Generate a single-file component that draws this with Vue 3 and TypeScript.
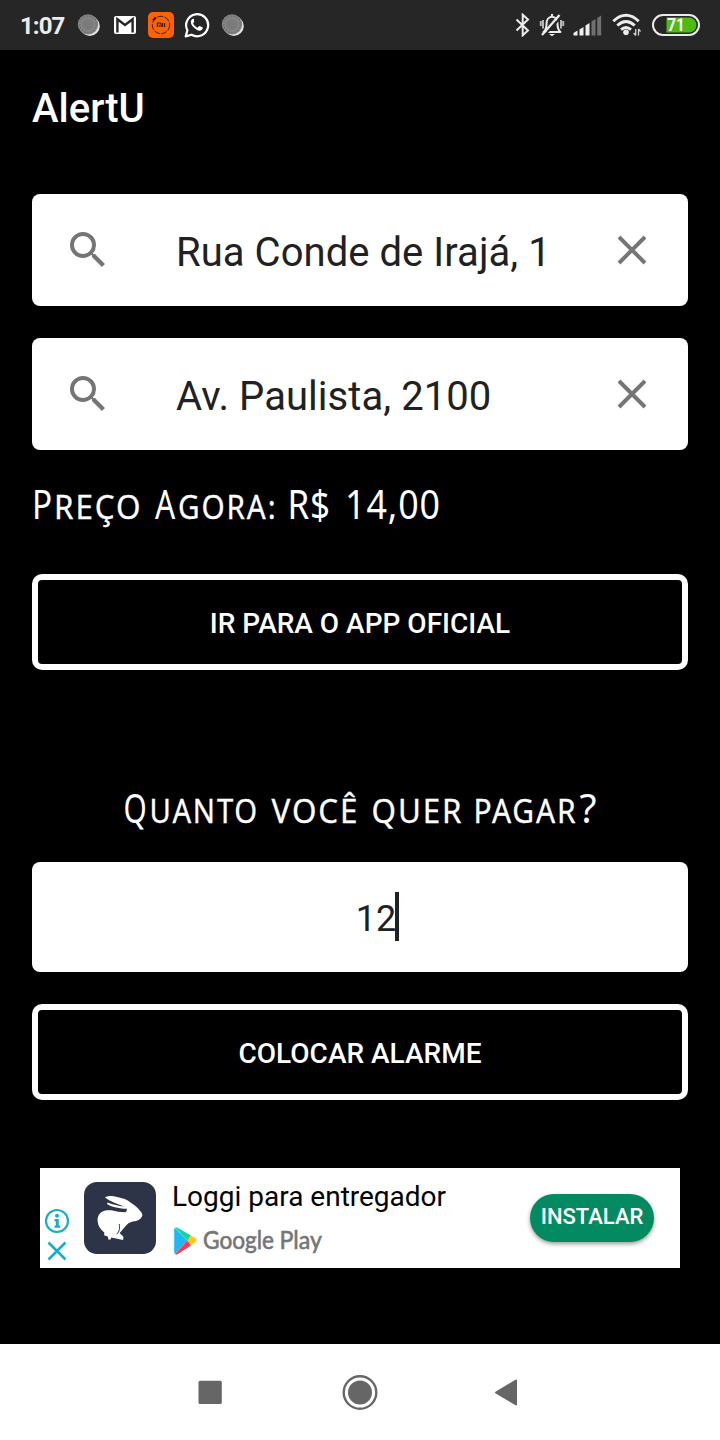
<script setup lang="ts">
import { ref } from 'vue'

interface Run {
  text: string
  x: number
  width: number
  small?: boolean
}

const addresses = ref<string[]>(['Rua Conde de Irajá, 1', 'Av. Paulista, 2100'])
const amount = ref('12')

const priceRuns: Run[] = [
  { text: 'P', x: 0, width: 21 },
  { text: 'reço', x: 22, width: 88.5, small: true },
  { text: 'A', x: 123, width: 21 },
  { text: 'gora:', x: 146, width: 99.5, small: true },
  { text: 'R$', x: 255.5, width: 43.5 },
  { text: '14,00', x: 313, width: 96 },
]

const questionRuns: Run[] = [
  { text: 'Q', x: 91.5, width: 24 },
  { text: 'uanto', x: 117.5, width: 109.5, small: true },
  { text: 'você', x: 239.5, width: 88, small: true },
  { text: 'quer', x: 339.5, width: 92, small: true },
  { text: 'pagar', x: 441.5, width: 104, small: true },
  { text: '?', x: 547.5, width: 18 },
]

const signalBars = [
  { x: 0.5, h: 5, on: true },
  { x: 6.5, h: 8.5, on: true },
  { x: 12.5, h: 12.5, on: true },
  { x: 18.5, h: 16.5, on: false },
  { x: 24.2, h: 20, on: false },
]
</script>

<template>
  <div class="screen">
    <header class="status">
      <span class="clock">1:07</span>
      <svg class="moon" width="24" height="24" viewBox="0 0 24 24">
        <circle cx="12.8" cy="13" r="10" fill="#e4e4e4" />
        <circle cx="11" cy="11.4" r="10.2" fill="#858585" />
        <circle cx="11" cy="11.4" r="8.3" fill="none" stroke="#686868" stroke-width="1.4" stroke-dasharray="1.3 1.8" />
        <circle cx="11" cy="11.4" r="5.5" fill="#7b7b7b" />
      </svg>
      <svg class="mail" width="22" height="18" viewBox="0 0 22 18">
        <rect width="22" height="18" rx="2" fill="#fff" />
        <path d="M3.4 16.5V3.2L11 9l7.6-5.8v13.3" fill="none" stroke="#262626" stroke-width="2.4" />
      </svg>
      <svg class="mi" width="26" height="26" viewBox="0 0 26 26">
        <rect width="26" height="26" rx="5" fill="#ff6200" />
        <circle cx="13" cy="13" r="8.7" fill="none" stroke="#3c2014" stroke-width="1" stroke-dasharray="6 1.4" />
        <path d="M5 8.5l2.8-3" stroke="#2b1b15" stroke-width="2" />
        <path d="M9.4 15v-4h2.7q1 0 1 1v3m-1.9-2.2V15M14.6 11v4m2-4v4" fill="none" stroke="#2b1b15" stroke-width="1.1" />
      </svg>
      <svg class="whats" width="26" height="26" viewBox="0 0 26 26">
        <path d="M1.7 24.4l1.7-6.1A11 11 0 1 1 7.6 22.7z" fill="none" stroke="#fff" stroke-width="2.2" stroke-linejoin="round" />
        <path d="M9.3 6.7c-.5 0-1 .2-1.5.8-2.2 2.5-.2 5.9 2.1 8.1 2.5 2.4 5.6 4.1 7.7 2.5 1.1-.8 1.3-2 1.1-2.5l-3-1.5c-.4-.2-.7 0-1 .4l-1 1.2c-2.1-.8-3.7-2.3-4.7-4.2l1-1.3c.2-.3.2-.6.1-.9L9.9 7c-.2-.3-.4-.3-.6-.3z" fill="#fff" />
      </svg>
      <svg class="moon last" width="24" height="24" viewBox="0 0 24 24">
        <circle cx="12.8" cy="13" r="10" fill="#e4e4e4" />
        <circle cx="11" cy="11.4" r="10.2" fill="#858585" />
        <circle cx="11" cy="11.4" r="8.3" fill="none" stroke="#686868" stroke-width="1.4" stroke-dasharray="1.3 1.8" />
        <circle cx="11" cy="11.4" r="5.5" fill="#7b7b7b" />
      </svg>
      <span class="grow"></span>
      <svg class="bt" width="16" height="24" viewBox="0 0 16 24">
        <path d="M1.5 6.5L13 17.5 7.7 22.3V1.7L13 6.5 1.5 17.5" fill="none" stroke="#ececec" stroke-width="2" />
      </svg>
      <svg class="bell" width="26" height="24" viewBox="0 0 26 24">
        <path d="M4.500 19c2.600-2 3-4 3-8 0-4 2-7.300 5.500-7.300s5.500 3.300 5.500 7.300c0 4 .4 6 3 8z" fill="none" stroke="#ececec" stroke-width="2" stroke-linejoin="round" />
        <path d="M10 21h6l-3 2.300zM12 1h2v3h-2z" fill="#ececec" />
        <path d="M1.800 8v5M4 7v8.500M24.200 8v5M22 7v8.500" stroke="#b5b5b5" stroke-width="2" />
        <path d="M4.500 23.500L22 4" stroke="#262626" stroke-width="2" />
        <path d="M3 22L20.500 2" stroke="#ececec" stroke-width="2.200" />
      </svg>
      <svg class="signal" width="29" height="21" viewBox="0 0 29 21">
        <path
          v-for="bar in signalBars"
          :key="bar.x"
          :d="`M${bar.x} 20.500v${2.500 - bar.h}l4-2.500v${bar.h}z`"
          :fill="bar.on ? '#efefef' : '#707070'"
        />
      </svg>
      <svg class="wifi" width="30" height="24" viewBox="0 0 30 24">
        <g fill="none" stroke="#ececec" stroke-width="2.900">
          <path d="M1.300 8.200Q14 -3.700 26.700 8.200" />
          <path d="M5.300 12.500Q14 4.500 22.700 12.500" />
          <path d="M9 16.600Q14 12.300 19 16.600" />
        </g>
        <circle cx="14" cy="19.300" r="2.800" fill="#ececec" />
        <path d="M23.700 16v6.500M26.500 16v6.500M21.700 20l2 2.500M28.500 18.500l-2-2.500" fill="none" stroke="#cfcfcf" stroke-width="1.300" />
      </svg>
      <svg class="battery" width="48" height="22" viewBox="0 0 48 22">
        <rect x="1" y="1" width="46" height="20" rx="10" fill="none" stroke="#ececec" stroke-width="2" />
        <path d="M14.500 3.500H37a7.500 7.500 0 0 1 0 15H14.500z" fill="#4dbb12" />
        <text class="level" x="24" y="17.200" text-anchor="middle" textLength="17.500" lengthAdjust="spacingAndGlyphs">71</text>
      </svg>
    </header>

    <main class="content">
      <h1 class="title">AlertU</h1>

      <div v-for="(address, i) in addresses" :key="i" class="field">
        <svg width="48" height="48" viewBox="0 0 24 24">
          <path fill="#757575" d="M15.500 14h-.79l-.28-.27A6.471 6.471 0 0 0 16 9.500 6.500 6.500 0 1 0 9.500 16c1.610 0 3.090-.59 4.230-1.570l.27.28v.79l5 4.990L20.490 19l-4.990-5zm-6 0C7.010 14 5 11.990 5 9.500S7.010 5 9.500 5 14 7.010 14 9.500 11.990 14 9.500 14z" />
        </svg>
        <span class="address">{{ address }}</span>
        <svg width="48" height="48" viewBox="0 0 48 48">
          <path d="M11 11l26 26M37 11L11 37" stroke="#757575" stroke-width="3.900" />
        </svg>
      </div>

      <svg class="caps price" width="656" height="68">
        <text
          v-for="run in priceRuns"
          :key="run.text"
          :class="{ small: run.small }"
          :x="run.x"
          y="45.200"
          :textLength="run.width"
          lengthAdjust="spacingAndGlyphs"
        >{{ run.text }}</text>
      </svg>

      <button class="outline">IR PARA O APP OFICIAL</button>

      <svg class="caps question" width="656" height="68">
        <text
          v-for="run in questionRuns"
          :key="run.text"
          :class="{ small: run.small }"
          :x="run.x"
          y="48.700"
          :textLength="run.width"
          lengthAdjust="spacingAndGlyphs"
        >{{ run.text }}</text>
      </svg>

      <div class="amount"><span>{{ amount }}</span><i class="caret"></i></div>

      <button class="outline">COLOCAR ALARME</button>

      <section class="ad">
        <div class="choices">
          <svg width="26" height="26" viewBox="0 0 26 26">
            <circle cx="13" cy="13" r="11" fill="none" stroke="#18aec9" stroke-width="2.200" />
            <circle cx="13" cy="7.700" r="2" fill="#18aec9" />
            <path d="M10.500 11h4.300v6.500h1.500v2.200h-5.800v-2.200h1.300v-4.300h-1.300z" fill="#18aec9" />
          </svg>
          <svg width="26" height="26" viewBox="0 0 26 26">
            <path d="M4.500 4.500l17 17M21.500 4.500l-17 17" stroke="#18aec9" stroke-width="2.600" />
          </svg>
        </div>
        <svg class="logo" width="72" height="72" viewBox="0 0 72 72">
          <rect width="72" height="72" rx="13" fill="#2e3447" />
          <path d="M21 15.500c2-2 8-2 12-.5 6 1.300 10 2.300 13.500 5.500 4 2.300 7.500 5.500 9.700 8.500 1.700 1.800 2.300 3.200 2.100 4.500-.6 3-4 5-7.500 5.800-3 .4-5.500 1-7.500 3-3 3.300-5 6-7.700 8.700l3.800 3.700-.3 3.300-11.800-2.500-1 2.300-2.200-.5v-2.500l-4-1.500.2-2.800c-4-3-6.500-7-6.700-11.500-.3-5 2-9 7.500-10.500 4-.8 9-.2 13 1.300l7.300.5c1.300-.8 1.500-2 1.500-3.500-7-.3-14.500-1.300-19.900-4.800l.7-1.600c5 2 11 3.500 16.500 4.200C33 21.500 26 19.500 21 15.500z" fill="#fff" />
          <path d="M35.200 42c.8 4 .5 7.500-2.700 10.300" fill="none" stroke="#2e3447" stroke-width="1" />
        </svg>
        <div class="copy">
          <span class="app">Loggi para entregador</span>
          <svg width="152" height="34" viewBox="0 0 152 34">
            <path d="M3 4L15.500 16.500 3 30q-.8-.5-.8-2V5.500q0-1 .8-1.500z" fill="#20b8f3" />
            <path d="M3 3.500q1-.7 2.500.2L19 11.500l-3.500 5z" fill="#18d49b" />
            <path d="M3 30.200q1 .8 2.500 0L19 21.500l-3.500-5z" fill="#f43b55" />
            <path d="M19 11.500l5 3.300q1.500 1.200 0 2.700l-5 4-3.500-5z" fill="#ffc718" />
            <text class="play" x="31" y="25" textLength="71" lengthAdjust="spacingAndGlyphs">Google</text>
            <text class="play" x="107.500" y="25" textLength="42.500" lengthAdjust="spacingAndGlyphs">Play</text>
          </svg>
        </div>
        <button class="install">INSTALAR</button>
      </section>
    </main>

    <nav class="nav">
      <svg width="24" height="24"><rect x=".5" y=".7" width="23.300" height="23.300" rx="1.500" fill="#666" /></svg>
      <svg class="home" width="36" height="37">
        <circle cx="18" cy="18.500" r="16.300" fill="none" stroke="#666" stroke-width="2.400" />
        <circle cx="18" cy="18.500" r="12" fill="#666" />
      </svg>
      <svg width="24" height="28"><path d="M22 2.500v24L2 14.500z" fill="#666" stroke="#666" stroke-width="2" stroke-linejoin="round" /></svg>
    </nav>
  </div>
</template>

<style>
body {
  margin: 0;
  background: #000;
}
</style>

<style scoped>
.screen {
  display: flex;
  flex-direction: column;
  width: 720px;
  height: 1440px;
  background: #000;
  font-family: Roboto, "Noto Sans", sans-serif;
  overflow: hidden;
}
svg {
  display: block;
  flex: none;
}
.status {
  display: flex;
  align-items: center;
  box-sizing: border-box;
  height: 50px;
  padding: 0 20px;
  background: #262626;
}
.clock {
  width: 57px;
  color: #ececec;
  font-size: 24px;
  font-weight: 700;
  letter-spacing: -.9px;
  line-height: 50px;
  padding-top: 2px;
}
.mail { margin-left: 13px; }
.mi { margin-left: 12px; }
.whats { margin-left: 10px; }
.moon.last { margin-left: 11px; }
.grow { flex: 1; }
.bell { margin-left: 8px; }
.signal { margin-left: 8px; }
.wifi { margin-left: 10px; }
.battery { margin-left: 10px; }
.level {
  fill: #fff;
  font-size: 18px;
  font-weight: 700;
}
.content {
  display: flex;
  flex-direction: column;
  height: 1294px;
  padding: 0 32px;
}
.title {
  box-sizing: border-box;
  margin: 0;
  height: 144px;
  padding-top: 1px;
  color: #fff;
  font-size: 40px;
  font-weight: 500;
  line-height: 116px;
}
.field {
  display: flex;
  align-items: center;
  box-sizing: border-box;
  height: 112px;
  padding: 0 32px;
  border-radius: 8px;
  background: #fff;
}
.field + .field { margin-top: 32px; }
.address {
  flex: 1;
  margin-left: 64px;
  padding-top: 4px;
  color: #212121;
  font-size: 40px;
  letter-spacing: .05px;
  white-space: nowrap;
}
.caps text {
  fill: #fff;
  font-family: "Noto Sans", sans-serif;
  font-size: 40px;
  letter-spacing: 1px;
}
.caps text.small {
  stroke: #fff;
  stroke-width: .3px;
  font-size: 32px;
  letter-spacing: 2px;
  text-transform: uppercase;
}
.price { margin: 24px 0 32px; }
.question { margin: 104px 0 20px; }
.outline {
  box-sizing: border-box;
  width: 656px;
  height: 96px;
  padding: 3px 0 0;
  border: 6px solid #fff;
  border-radius: 10px;
  background: #000;
  color: #fff;
  font-family: Roboto, sans-serif;
  font-size: 28px;
  font-weight: 500;
}
.amount {
  display: flex;
  align-items: center;
  justify-content: center;
  box-sizing: border-box;
  height: 110px;
  margin-bottom: 32px;
  padding-left: 35px;
  border-radius: 8px;
  background: #fff;
  color: #212121;
  font-size: 36px;
}
.amount span { padding-top: 3px; }
.caret {
  width: 4px;
  height: 49px;
  margin: 0 0 2px -1px;
  background: #212121;
}
.ad {
  display: flex;
  box-sizing: border-box;
  height: 100px;
  margin: 68px 8px 0;
  background: #fff;
}
.choices {
  display: flex;
  flex-direction: column;
  gap: 4px;
  width: 26px;
  padding: 40px 0 0 4px;
}
.logo { margin: 14px 0 0 14px; }
.copy {
  display: flex;
  flex-direction: column;
  width: 358px;
  padding-left: 16px;
}
.app {
  height: 56px;
  color: #000;
  font-size: 28px;
  line-height: 57px;
  white-space: nowrap;
}
.play {
  fill: #757575;
  stroke: #757575;
  stroke-width: .6px;
  font-family: Lato, sans-serif;
  font-size: 25px;
}
.install {
  width: 124px;
  height: 48px;
  margin-top: 26px;
  padding: 0 0 3px;
  border: 0;
  border-radius: 24px;
  background: #048a60;
  box-shadow: 0 2px 4px rgba(0, 0, 0, .4);
  color: #fff;
  font-family: Roboto, sans-serif;
  font-size: 22px;
  font-weight: 500;
}
.nav {
  display: flex;
  align-items: center;
  justify-content: space-between;
  box-sizing: border-box;
  height: 96px;
  padding: 0 202px 0 198px;
  background: #fff;
}
.home { margin-left: 3px; }
</style>
